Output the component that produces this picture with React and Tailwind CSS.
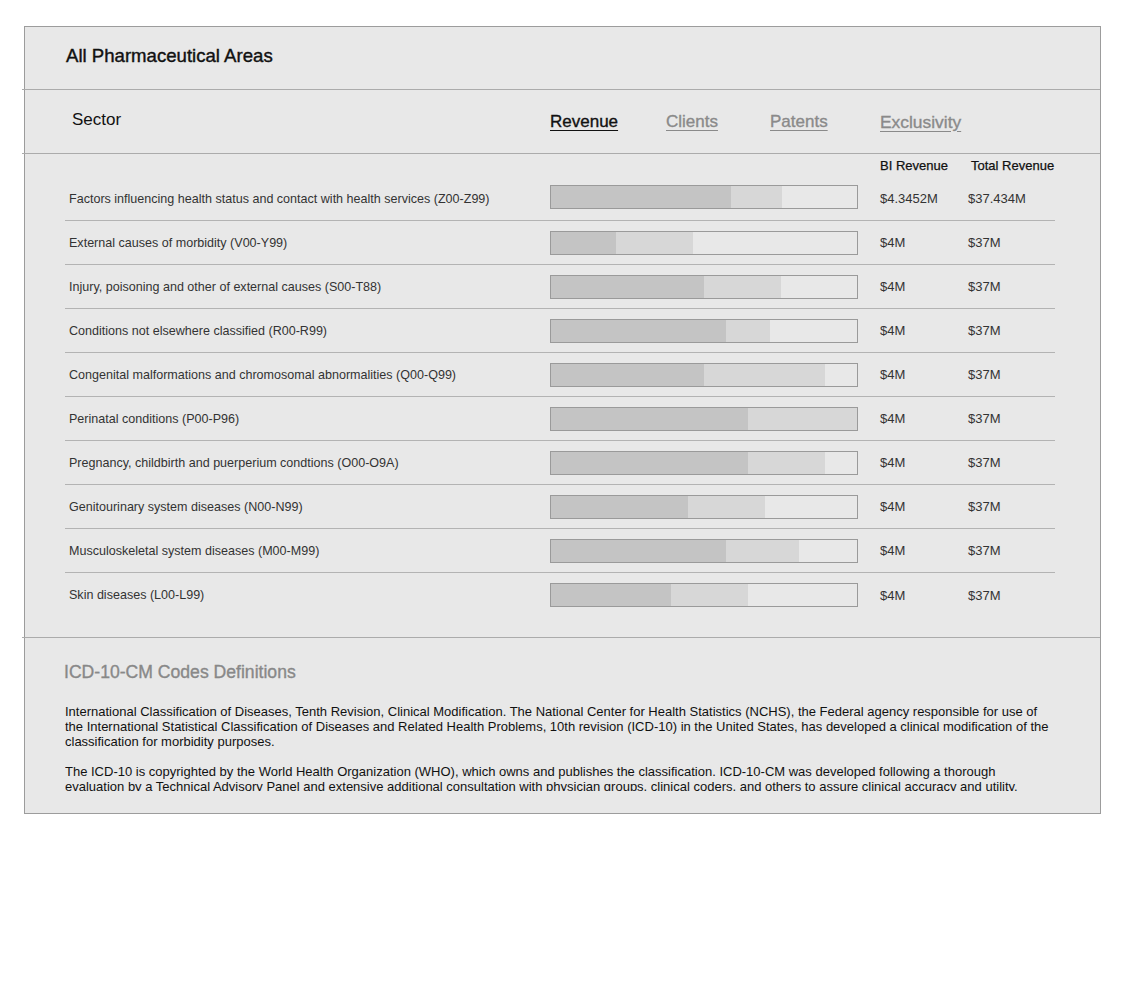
import React from "react";

const rows = [
  { label: "Factors influencing health status and contact with health services (Z00-Z99)", dark: 180, light: 51, bi: "$4.3452M", total: "$37.434M" },
  { label: "External causes of morbidity (V00-Y99)", dark: 65, light: 77, bi: "$4M", total: "$37M" },
  { label: "Injury, poisoning and other of external causes (S00-T88)", dark: 153, light: 77, bi: "$4M", total: "$37M" },
  { label: "Conditions not elsewhere classified (R00-R99)", dark: 175, light: 44, bi: "$4M", total: "$37M" },
  { label: "Congenital malformations and chromosomal abnormalities (Q00-Q99)", dark: 153, light: 121, bi: "$4M", total: "$37M" },
  { label: "Perinatal conditions (P00-P96)", dark: 197, light: 109, bi: "$4M", total: "$37M" },
  { label: "Pregnancy, childbirth and puerperium condtions (O00-O9A)", dark: 197, light: 77, bi: "$4M", total: "$37M" },
  { label: "Genitourinary system diseases (N00-N99)", dark: 137, light: 77, bi: "$4M", total: "$37M" },
  { label: "Musculoskeletal system diseases (M00-M99)", dark: 175, light: 73, bi: "$4M", total: "$37M" },
  { label: "Skin diseases (L00-L99)", dark: 120, light: 77, bi: "$4M", total: "$37M" },
];

function Divider() {
  return <div className="-ml-[3px] h-px bg-[#ababab]" />;
}

export default function App() {
  return (
    <div className="w-[1122px] h-[1004px] bg-white font-['Liberation_Sans',Arial,sans-serif] pt-[26px] pl-[24px]">
      <div className="w-[1077px] h-[788px] border border-[#9c9c9c] bg-[#e8e8e8]">
        {/* header */}
        <div className="h-[62px] pl-[41px] pb-[5px] flex items-center text-[18.6px] text-[#111] [-webkit-text-stroke:0.4px_#111]">
          All Pharmaceutical Areas
        </div>
        <Divider />
        {/* tabs */}
        <div className="h-[63px] flex items-center">
          <div className="w-[525px] pl-[47px] pb-[3px] text-[17px] text-[#111]">Sector</div>
          <div className="flex items-center text-[17px] pt-[1px]">
            <span className="w-[116px] text-[#111] underline underline-offset-[3px] [-webkit-text-stroke:0.35px_#111]">Revenue</span>
            <span className="w-[104px] text-[#8a8a8a] underline underline-offset-[3px] [-webkit-text-stroke:0.35px_#8a8a8a]">Clients</span>
            <span className="w-[110px] text-[#8a8a8a] underline underline-offset-[3px] [-webkit-text-stroke:0.35px_#8a8a8a]">Patents</span>
            <span className="text-[#8a8a8a] underline underline-offset-[3px] text-[17.4px] [-webkit-text-stroke:0.35px_#8a8a8a]">Exclusivity</span>
          </div>
        </div>
        <Divider />
        {/* table */}
        <div className="ml-[40px] w-[990px]">
          <div className="h-[23px] flex items-center text-[13px] text-[#111] [-webkit-text-stroke:0.25px_#111]">
            <div className="w-[815px]" />
            <div className="w-[91px]">BI Revenue</div>
            <div>Total Revenue</div>
          </div>
          {rows.map((r, i) => (
            <div
              key={i}
              className={
                i < rows.length - 1
                  ? "h-[44px] flex items-center border-b border-[#b3b3b3] text-[#333]"
                  : "h-[44px] flex items-center text-[#333]"
              }
            >
              <div className="w-[485px] pl-[4px] pt-[1px] text-[12.55px]">{r.label}</div>
              <div className={i === 0 ? "w-[308px] h-[24px] mb-[3px] border border-[#9a9a9a] bg-[#e8e8e8] flex" : "w-[308px] h-[24px] border border-[#9a9a9a] bg-[#e8e8e8] flex"}>
                <div className="h-full bg-[#c4c4c4]" style={{ width: r.dark }} />
                <div className="h-full bg-[#d7d7d7]" style={{ width: r.light }} />
              </div>
              <div className="ml-[22px] w-[88px] pt-[1px] text-[13px]">{r.bi}</div>
              <div className="pt-[1px] text-[13px]">{r.total}</div>
            </div>
          ))}
          <div className="h-[20px]" />
        </div>
        <Divider />
        {/* footer */}
        <div className="pl-[39px]">
          <div className="mt-[24px] h-[20px] leading-[20px] text-[17.6px] text-[#888] [-webkit-text-stroke:0.35px_#888]">
            ICD-10-CM Codes Definitions
          </div>
          <div className="mt-[22px] ml-[1px] w-[992px] h-[87px] overflow-hidden text-[13px] leading-[15px] text-[#111]">
            <p>
              International Classification of Diseases, Tenth Revision, Clinical Modification. The National Center for Health Statistics (NCHS), the Federal agency responsible for use of the International Statistical Classification of Diseases and Related Health Problems, 10th revision (ICD-10) in the United States, has developed a clinical modification of the classification for morbidity purposes.
            </p>
            <p className="mt-[15px]">
              The ICD-10 is copyrighted by the World Health Organization (WHO), which owns and publishes the classification. ICD-10-CM was developed following a thorough evaluation by a Technical Advisory Panel and extensive additional consultation with physician groups, clinical coders, and others to assure clinical accuracy and utility.
            </p>
          </div>
        </div>
      </div>
    </div>
  );
}
